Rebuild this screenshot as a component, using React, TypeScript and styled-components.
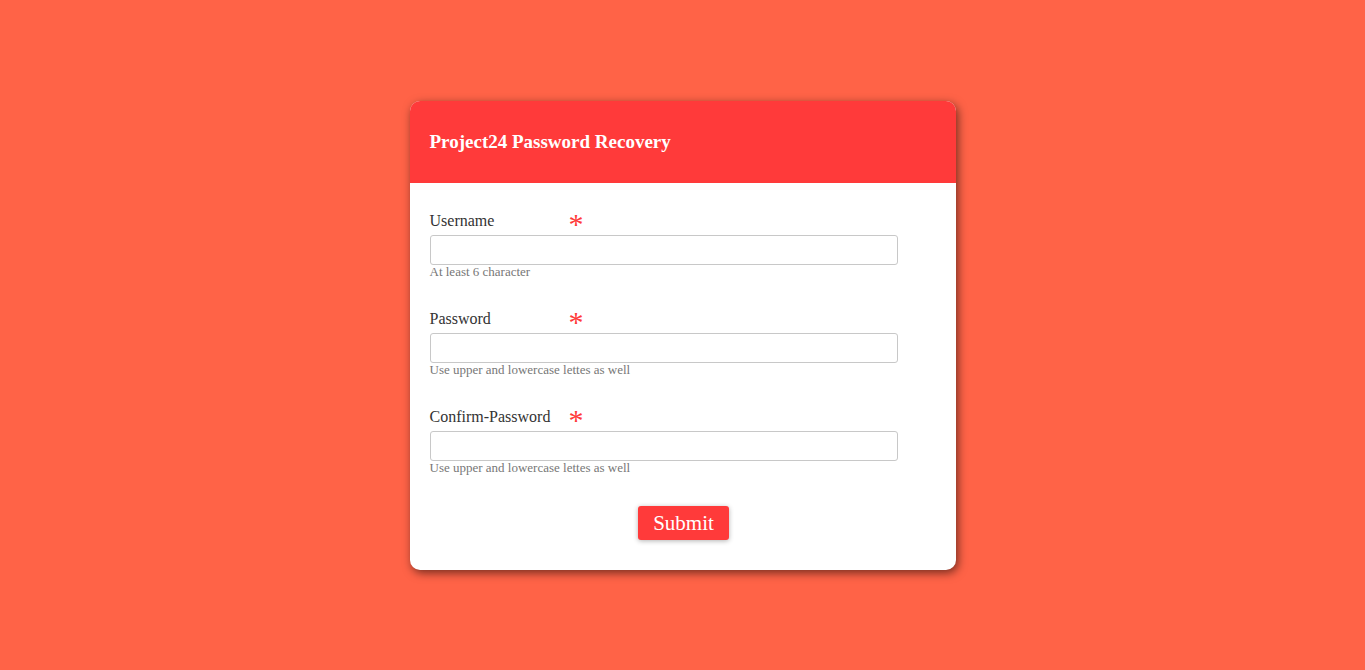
import React from 'react';
import styled, { createGlobalStyle } from 'styled-components';

const GlobalStyle = createGlobalStyle`
  html, body {
    margin: 0;
    padding: 0;
    background-color: #ff6347;
    font-family: "Liberation Serif", "Times New Roman", serif;
  }
`;

const StyledPage = styled.div`
  display: flex;
  justify-content: center;
  align-items: center;
  min-height: 100vh;
`;

const StyledCard = styled.div`
  width: 546px;
  background-color: white;
  border-radius: 10px;
  overflow: hidden;
  box-shadow: 2px 3px 10px rgba(0, 0, 0, 0.55);
`;

const StyledHeader = styled.div`
  display: flex;
  align-items: center;
  height: 82px;
  padding: 0 20px;
  background-color: #ff3a3a;
`;

const StyledTitle = styled.h2`
  margin: 0;
  color: white;
  font-size: 19px;
  font-weight: bold;
`;

const StyledForm = styled.form`
  display: flex;
  flex-direction: column;
  padding: 29px 58px 30px 20px;
`;

const StyledGroup = styled.div`
  display: flex;
  flex-direction: column;
  margin-bottom: 32px;
`;

const StyledLabelRow = styled.div`
  display: flex;
  align-items: flex-start;
  height: 18px;
  margin-bottom: 5px;
`;

const StyledLabel = styled.label`
  width: 139px;
  font-size: 16px;
  line-height: 18px;
  color: #333;
`;

const StyledRequired = styled.span`
  font-size: 30px;
  line-height: 18px;
  color: #ff3a3a;
  transform: translateY(3px);
`;

const StyledInput = styled.input`
  box-sizing: border-box;
  width: 468px;
  height: 30px;
  border: 1px solid #c8c8c8;
  border-radius: 3px;
  padding: 4px 8px;
  font-size: 14px;
`;

const StyledHint = styled.small`
  font-size: 13px;
  line-height: 13px;
  color: #777;
`;

const StyledButton = styled.button`
  align-self: center;
  margin-left: 40px;
  padding: 5px 15px;
  border: none;
  border-radius: 3px;
  background-color: #ff3a3a;
  color: white;
  font-family: "Liberation Serif", "Times New Roman", serif;
  font-size: 21px;
  line-height: 24px;
  cursor: pointer;
  box-shadow: 0 1px 5px rgba(0, 0, 0, 0.3);
`;

const fields = [
  { label: 'Username', type: 'text', hint: 'At least 6 character' },
  { label: 'Password', type: 'password', hint: 'Use upper and lowercase lettes as well' },
  { label: 'Confirm-Password', type: 'password', hint: 'Use upper and lowercase lettes as well' },
];

const App = () => (
  <>
    <GlobalStyle />
    <StyledPage>
      <StyledCard>
        <StyledHeader>
          <StyledTitle>Project24 Password Recovery</StyledTitle>
        </StyledHeader>
        <StyledForm onSubmit={ (e) => e.preventDefault() }>
          {fields.map((field) => (
            <StyledGroup key={ field.label }>
              <StyledLabelRow>
                <StyledLabel>{field.label}</StyledLabel>
                <StyledRequired>*</StyledRequired>
              </StyledLabelRow>
              <StyledInput type={ field.type } />
              <StyledHint>{field.hint}</StyledHint>
            </StyledGroup>
          ))}
          <StyledButton type="submit">Submit</StyledButton>
        </StyledForm>
      </StyledCard>
    </StyledPage>
  </>
);

export default App;
